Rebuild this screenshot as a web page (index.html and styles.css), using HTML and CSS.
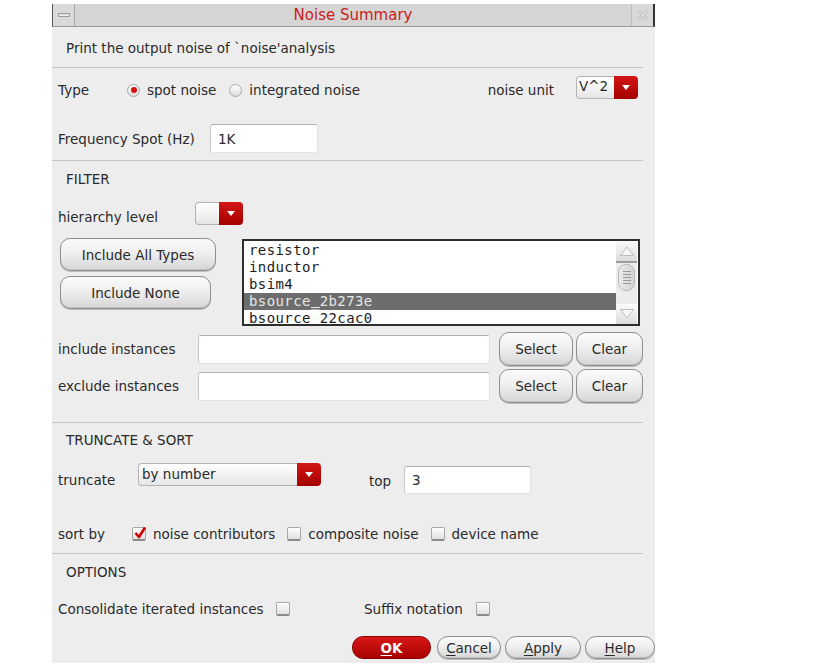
FILE: index.html
```html
<!DOCTYPE html>
<html>
<head>
<meta charset="utf-8">
<link rel="stylesheet" href="styles.css">
</head>
<body>
<div class="dialog">
  <div class="titlebar">
    <div class="tb-btn tb-min"><span class="minbar"></span></div>
    <div class="title">Noise Summary</div>
    <div class="tb-btn tb-close">
      <svg width="14" height="14" viewBox="0 0 14 14"><path d="M2 2 L12 12 M12 2 L2 12" stroke="#c4c4c4" stroke-width="3" fill="none"/><path d="M2 2 L12 12 M12 2 L2 12" stroke="#e6e6e6" stroke-width="1" fill="none"/></svg>
    </div>
  </div>

  <div class="sec1">Print the output noise of `noise'analysis</div>
  <div class="sep"></div>

  <div class="sec2">
    <div class="row row-type">
      <span class="lbl w-type">Type</span>
      <span class="radio on"></span><span class="rtext">spot noise</span>
      <span class="radio"></span><span class="rtext">integrated noise</span>
      <span class="unit">noise unit</span>
      <span class="combo combo-unit"><span class="cval top">V^2</span><span class="carrow"></span></span>
    </div>
    <div class="row row-freq">
      <span class="lbl w-freq">Frequency Spot (Hz)</span>
      <span class="input in-freq">1K</span>
    </div>
  </div>
  <div class="sep"></div>

  <div class="sec3">
    <div class="row head">FILTER</div>
    <div class="row row-hier">
      <span class="lbl w-hier low">hierarchy level</span>
      <span class="combo combo-hier"><span class="cval"></span><span class="carrow"></span></span>
    </div>
    <div class="row row-list">
      <div class="btncol">
        <div class="btn b-all">Include All Types</div>
        <div class="btn b-none">Include None</div>
      </div>
      <div class="listbox">
        <div class="items">
          <div class="item">resistor</div>
          <div class="item">inductor</div>
          <div class="item">bsim4</div>
          <div class="item sel">bsource<span class="us">_</span>2b273e</div>
          <div class="item">bsource<span class="us">_</span>22cac0</div>
        </div>
        <div class="scroll">
          <div class="sarrow up"><svg width="16" height="12" viewBox="0 0 16 12"><path d="M1.5 10.5 L8 2 L14.5 10.5 Z" fill="#f6f6f6" stroke="#bdbdbd"/></svg></div>
          <div class="thumb"><span></span><span></span><span></span><span></span><span></span></div>
          <div class="strack"></div>
          <div class="sarrow down"><svg width="16" height="12" viewBox="0 0 16 12"><path d="M1.5 1.5 L8 10 L14.5 1.5 Z" fill="#f6f6f6" stroke="#bdbdbd"/></svg></div>
        </div>
      </div>
    </div>
    <div class="row row-inst">
      <span class="lbl w-inst">include instances</span>
      <span class="input in-inst"></span>
      <div class="btn b-sel">Select</div>
      <div class="btn b-clr">Clear</div>
    </div>
    <div class="row row-inst2">
      <span class="lbl w-inst">exclude instances</span>
      <span class="input in-inst"></span>
      <div class="btn b-sel">Select</div>
      <div class="btn b-clr">Clear</div>
    </div>
  </div>
  <div class="sep"></div>

  <div class="sec4">
    <div class="row head">TRUNCATE &amp; SORT</div>
    <div class="row row-trunc">
      <span class="lbl w-trunc">truncate</span>
      <span class="combo combo-trunc"><span class="cval top">by number</span><span class="carrow"></span></span>
      <span class="lbl w-top">top</span>
      <span class="input in-top">3</span>
    </div>
    <div class="row row-sort">
      <span class="lbl w-sort">sort by</span>
      <span class="check on"><svg width="14" height="14" viewBox="0 0 14 14"><path d="M2.5 7 L6 11 L12 1.5" stroke="#d00000" stroke-width="2.6" fill="none" stroke-linejoin="round"/></svg></span><span class="ctext t1">noise contributors</span>
      <span class="check"></span><span class="ctext t2">composite noise</span>
      <span class="check"></span><span class="ctext">device name</span>
    </div>
  </div>
  <div class="sep"></div>

  <div class="sec5">
    <div class="row head">OPTIONS</div>
    <div class="row row-opt">
      <span class="lbl w-cons">Consolidate iterated instances</span>
      <span class="check"></span>
      <span class="lbl w-suf">Suffix notation</span>
      <span class="check"></span>
    </div>
    <div class="row row-btns">
      <div class="btn red b-ok"><u>O</u>K</div>
      <div class="btn b-cancel"><u>C</u>ancel</div>
      <div class="btn b-apply"><u>A</u>pply</div>
      <div class="btn b-help"><u>H</u>elp</div>
    </div>
  </div>
</div>
</body>
</html>
```

FILE: styles.css
```css
html, body {
  margin: 0;
  padding: 0;
  background: #ffffff;
}
body {
  font-family: "DejaVu Sans", sans-serif;
  font-size: 13.5px;
  color: #2a2a2a;
}
.dialog {
  margin-left: 52px;
  margin-top: 4px;
  width: 603px;
  background: #ededed;
  padding-bottom: 4px;
}
.titlebar {
  display: flex;
  height: 22px;
  background: #d5d5d5;
  border-bottom: 1px solid #9a9a9a;
  border-left: 1px solid #555;
  border-right: 2px solid #333;
}
.tb-btn {
  width: 21px;
  display: flex;
  align-items: center;
  justify-content: center;
  background: #d9d9d9;
}
.tb-min { border-right: 1px solid #a8a8a8; }
.tb-close { border-left: 1px solid #bdbdbd; }
.minbar {
  width: 10px;
  height: 2px;
  border: 1px solid #9a9a9a;
  background: #e8e8e8;
}
.title {
  flex: 1;
  text-align: center;
  color: #cc2020;
  font-size: 15px;
  line-height: 23px;
}
.sec1 {
  height: 40px;
  line-height: 42px;
  padding-left: 14px;
}
.sep {
  height: 1px;
  width: 591px;
  background: #c6c6c6;
}
.row {
  display: flex;
  align-items: center;
}
.lbl { flex: none; padding-left: 6px; box-sizing: border-box; }
.head { padding-left: 14px; height: 20px; }
.low { padding-top: 8px; }

/* section 2 */
.sec2 { padding-bottom: 7px; }
.row-type { margin-top: 9px; height: 26px; }
.w-type { width: 75px; }
.radio {
  width: 13px;
  height: 13px;
  border-radius: 50%;
  box-sizing: border-box;
  border: 1px solid #a9a9a9;
  background: linear-gradient(#fdfdfd, #dcdcdc);
  display: inline-flex;
  align-items: center;
  justify-content: center;
  flex: none;
}
.radio.on::after {
  content: "";
  width: 6px;
  height: 6px;
  border-radius: 50%;
  background: #d81010;
}
.rtext { margin-left: 7px; margin-right: 13px; }
.unit { margin-left: auto; margin-right: 22px; }
.combo {
  display: flex;
  height: 23px;
  box-sizing: border-box;
  flex: none;
}
.cval {
  flex: 1;
  background: linear-gradient(#ffffff, #e6e6e6);
  border: 1px solid #b4b4b4;
  border-right: none;
  border-radius: 4px 0 0 4px;
  padding-left: 2px;
  line-height: 20px;
}
.cval.top { line-height: 19px; }
.carrow {
  width: 24px;
  background: linear-gradient(#d21616, #a40000);
  border-radius: 0 4px 4px 0;
  display: flex;
  align-items: center;
  justify-content: center;
}
.carrow::after {
  content: "";
  border-left: 4px solid transparent;
  border-right: 4px solid transparent;
  border-top: 5px solid #ffffff;
}
.combo-unit { width: 62px; margin-right: 17px; align-self: flex-start; margin-top: -1px; }
.row-freq { margin-top: 21px; height: 29px; }
.w-freq { width: 158px; }
.input {
  flex: none;
  box-sizing: border-box;
  background: #ffffff;
  border: 1px solid #e2e2e2;
  border-top: 1px solid #b0b0b0;
  border-left: 1px solid #c8c8c8;
  border-radius: 3px;
  padding-left: 7px;
  display: flex;
  align-items: center;
}
.in-freq { width: 108px; height: 29px; }

/* section 3 */
.sec3 { padding-bottom: 19px; }
.sec3 .head { margin-top: 8px; }
.row-hier { margin-top: 12px; height: 24px; }
.w-hier { width: 143px; }
.combo-hier { width: 48px; }
.row-list { margin-top: 13px; align-items: flex-start; height: 87px; }
.btncol {
  margin-left: 8px;
  width: 182px;
  flex: none;
  display: flex;
  flex-direction: column;
  gap: 5px;
}
.btn {
  box-sizing: border-box;
  border: 1px solid #8e8e8e;
  border-radius: 10px;
  background: linear-gradient(#fbfbfb 0%, #efefef 45%, #d6d6d6 100%);
  box-shadow: inset 0 -1px 0 #c4c4c4, 0 1px 0 #bdbdbd;
  display: flex;
  align-items: center;
  justify-content: center;
  flex: none;
  color: #2a2a2a;
}
.b-all { width: 156px; height: 33px; }
.b-none { width: 151px; height: 33px; }
.listbox {
  margin-top: 1px;
  width: 398px;
  height: 87px;
  box-sizing: border-box;
  border: 2px solid #2e2e2e;
  background: #ffffff;
  display: flex;
  overflow: hidden;
}
.items {
  flex: 1;
  padding-top: 1px;
  font-family: "DejaVu Sans Mono", monospace;
  font-size: 14px;
  letter-spacing: 0.4px;
  color: #1c1c1c;
  overflow: hidden;
}
.item { height: 17px; line-height: 17px; padding-left: 5px; white-space: nowrap; }
.item.sel { background: #6d6d6d; color: #e6e6e6; }
.us {
  background-image: linear-gradient(currentColor, currentColor);
  background-repeat: no-repeat;
  background-size: 100% 1px;
  background-position: 0 13.5px;
}
.scroll {
  width: 21px;
  flex: none;
  margin-right: 1px;
  background: #ececec;
  display: flex;
  flex-direction: column;
  align-items: center;
}
.sarrow {
  width: 21px;
  height: 20px;
  display: flex;
  align-items: center;
  justify-content: center;
  background: linear-gradient(#fafafa, #dcdcdc);
}
.sarrow.up { border-bottom: 2px solid #9c9c9c; }
.thumb {
  width: 17px;
  height: 27px;
  margin-top: 1px;
  border-radius: 8px;
  border: 1px solid #b9b9b9;
  box-sizing: border-box;
  background: linear-gradient(90deg, #eaeaea, #d4d4d4);
  display: flex;
  flex-direction: column;
  align-items: center;
  justify-content: center;
  gap: 2px;
}
.thumb span { width: 8px; height: 1px; background: #9a9a9a; }
.strack { flex: 1; }
.row-inst { margin-top: 7px; height: 34px; }
.row-inst2 { margin-top: 3px; height: 34px; }
.w-inst { width: 146px; }
.in-inst { width: 292px; height: 29px; margin-right: 9px; }
.b-sel { width: 74px; height: 34px; margin-right: 3px; }
.b-clr { width: 67px; height: 34px; }

/* section 4 */
.sec4 { padding-bottom: 9px; }
.sec4 .head { margin-top: 7px; }
.row-trunc { margin-top: 13px; height: 31px; }
.w-trunc { width: 86px; padding-top: 3px; }
.combo-trunc { width: 183px; align-self: flex-start; }
.combo-trunc .cval { padding-left: 3px; line-height: 21px; }
.w-top { width: 83px; padding-left: 48px; padding-top: 4px; }
.in-top { width: 127px; height: 28px; align-self: flex-end; }
.row-sort { margin-top: 30px; height: 20px; }
.w-sort { width: 80px; }
.check {
  width: 14px;
  height: 14px;
  box-sizing: border-box;
  border: 1px solid #a8a8a8;
  border-bottom: 2px solid #8a8a8a;
  border-radius: 2px;
  background: linear-gradient(#fefefe, #e0e0e0);
  flex: none;
  position: relative;
}
.check svg { position: absolute; left: 0; top: -2px; }
.ctext { margin-left: 7px; }
.t1 { margin-right: 12px; }
.t2 { margin-right: 12px; }

/* section 5 */
.sec5 .head { margin-top: 8px; }
.row-opt { margin-top: 17px; height: 20px; }
.w-cons { width: 224px; }
.w-suf { width: 118px; margin-left: 68px; }
.row-btns {
  margin-top: 17px;
  height: 23px;
  justify-content: flex-end;
  gap: 4px;
}
.row-btns .btn { height: 23px; border-radius: 11px; }
.b-ok { width: 79px; margin-right: 2px; }
.b-cancel { width: 64px; }
.b-apply { width: 76px; }
.b-help { width: 70px; }
.btn.red {
  background: linear-gradient(#d81818, #a80000);
  border-color: #8a0000;
  color: #ffffff;
  font-weight: bold;
  box-shadow: none;
}
u { text-decoration-thickness: 1px; text-underline-offset: 2px; }
```
